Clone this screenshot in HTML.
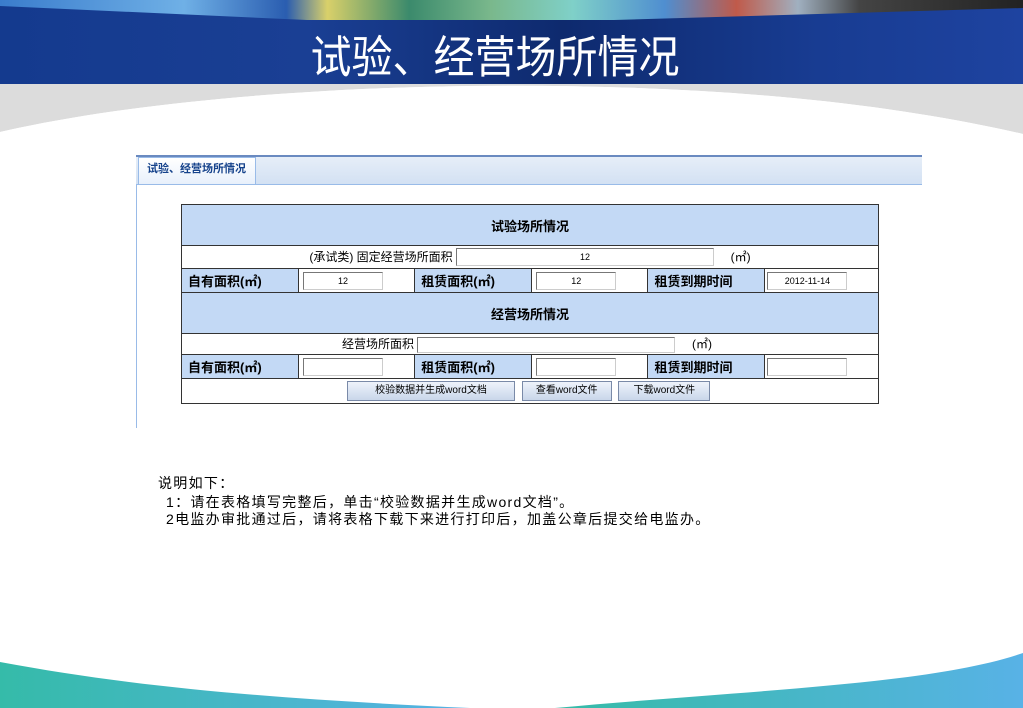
<!DOCTYPE html>
<html><head><meta charset="utf-8"><style>
*{margin:0;padding:0;box-sizing:border-box}
body{width:1023px;height:708px;position:relative;overflow:hidden;background:#fff;font-family:"Liberation Sans","Noto Sans CJK SC",sans-serif;color:#000}
.abs{position:absolute}
#hdr{left:0;top:0;width:1023px;height:84px;background:linear-gradient(90deg,#143a8e 0%,#1a3f94 30%,#0e2a6e 55%,#183c92 80%,#1e43a0 100%)}
#strip{left:0;top:0;width:1023px;height:20px;background:linear-gradient(90deg,#3a7ccc 0%,#6fb0e6 18%,#2a5db0 28%,#d9d06a 32%,#3b8a6c 40%,#7ab88c 48%,#7fd0c8 56%,#4f8ed0 65%,#c05a4a 72%,#a0b0c0 78%,#444 84%,#222 100%);clip-path:polygon(0 0,100% 0,100% 40%,60% 100%,30% 100%,0 30%)}
#title{left:0;top:28px;width:990px;text-align:center;color:#fff;font-size:41px;font-family:"Noto Sans CJK SC",sans-serif;line-height:50px;letter-spacing:0;transform:scaleY(1.08)}
#tabbar{left:136px;top:155px;width:786px;height:30px;background:linear-gradient(#e6eef8,#d3e1f3);border-top:2px solid #6a8ac0;border-bottom:1px solid #99bbe8}
#tab{left:138px;top:157px;width:118px;height:27px;background:linear-gradient(#fff,#e8f0fb);border:1px solid #99bbe8;border-bottom:none;font-size:11px;font-weight:bold;color:#15428b;line-height:22px;padding-left:8px}
#pl{left:136px;top:155px;width:1px;height:273px;background:#99bbe8}
table{position:absolute;left:181px;top:204px;width:698px;border-collapse:collapse;font-size:12px}
td{border:1px solid #333;height:24px;padding:0}
.h{background:#c3d9f5;height:41px;text-align:center;font-weight:bold;font-size:13px}
.l{background:#c3d9f5;font-weight:bold;font-size:13px;padding-left:6px;width:117px}
.w{background:#fff}
.i{display:inline-block;width:80px;height:18px;border:1px solid #777;border-right-color:#ccc;border-bottom-color:#ccc;background:#fff;font-size:9px;text-align:center;line-height:16px;vertical-align:middle}
.b{display:inline-block;height:20px;border:1px solid #7a8aa8;background:linear-gradient(#eef3fb,#c9d6ea);font-size:10px;line-height:18px;text-align:center;vertical-align:middle}
.n{left:158px;font-size:14px;line-height:16px;letter-spacing:1.3px;white-space:nowrap}
</style></head><body>
<div class="abs" id="hdr"></div>
<div class="abs" id="strip"></div>
<svg class="abs" style="left:0;top:84px" width="1023" height="50"><path d="M0 0H1023V50C850 10 650 0 470 2C300 4 120 20 0 48Z" fill="#dcdcdc"/><path d="M0 48C120 20 300 4 470 2C650 0 850 10 1023 50V50H0Z" fill="#fff"/></svg>
<div class="abs" id="title">试验、经营场所情况</div>
<svg class="abs" style="left:0;top:650px" width="1023" height="58"><defs><linearGradient id="g" x1="0" x2="1"><stop offset="0" stop-color="#35bba9"/><stop offset=".47" stop-color="#58b2e6"/><stop offset=".55" stop-color="#36bba8"/><stop offset="1" stop-color="#58b2e6"/></linearGradient></defs><path d="M0 12C150 40 300 50 470 58H555C750 40 930 35 1023 3V58H0Z" fill="url(#g)"/></svg>
<div class="abs" id="pl"></div>
<div class="abs" id="tabbar"></div>
<div class="abs" id="tab">试验、经营场所情况</div>
<table>
<tr><td colspan="6" class="h">试验场所情况</td></tr>
<tr><td colspan="6" class="w" style="height:23px;text-align:center">(承试类) 固定经营场所面积 <span class="i" style="width:258px">12</span> &nbsp; &nbsp; (㎡)</td></tr>
<tr><td class="l">自有面积(㎡)</td><td class="w" style="padding-left:4px"><span class="i">12</span></td><td class="l">租赁面积(㎡)</td><td class="w" style="padding-left:4px"><span class="i">12</span></td><td class="l">租赁到期时间</td><td class="w" style="padding-left:2px"><span class="i">2012-11-14</span></td></tr>
<tr><td colspan="6" class="h">经营场所情况</td></tr>
<tr><td colspan="6" class="w" style="height:21px;padding-left:160px">经营场所面积 <span class="i" style="width:258px;height:16px"></span> &nbsp; &nbsp; (㎡)</td></tr>
<tr><td class="l">自有面积(㎡)</td><td class="w" style="padding-left:4px"><span class="i"></span></td><td class="l">租赁面积(㎡)</td><td class="w" style="padding-left:4px"><span class="i"></span></td><td class="l">租赁到期时间</td><td class="w" style="padding-left:2px"><span class="i"></span></td></tr>
<tr><td colspan="6" class="w" style="height:25px;padding-left:165px"><span class="b" style="width:168px">校验数据并生成word文档</span> &nbsp;<span class="b" style="width:90px">查看word文件</span> &nbsp;<span class="b" style="width:92px">下载word文件</span></td></tr>
</table>
<div class="abs n" style="top:475px">说明如下：</div>
<div class="abs n" style="top:494px;left:166px">1：请在表格填写完整后，单击“校验数据并生成word文档”。</div>
<div class="abs n" style="top:511px;left:166px">2电监办审批通过后，请将表格下载下来进行打印后，加盖公章后提交给电监办。</div>
</body></html>
